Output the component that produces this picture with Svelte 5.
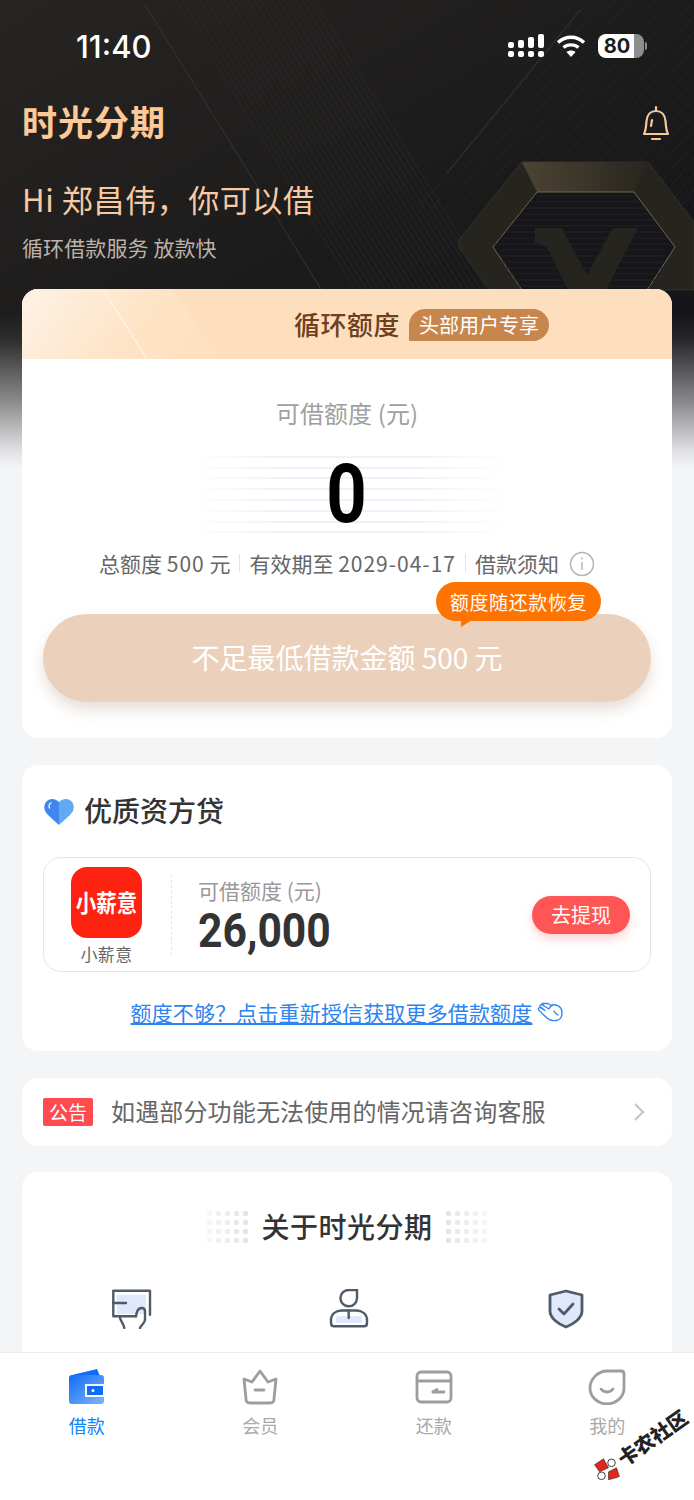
<script lang="ts">
  // hairlines of the dark hero background
  const leftBand = Array.from({ length: 24 }, (_, i) => 170 + i * 6);
  const rightBand = Array.from({ length: 26 }, (_, i) => 590 + i * 13);
  const stripes = [0, 11, 21, 32, 43, 54, 65, 75];
  const hexLines = Array.from({ length: 16 }, (_, i) => 196 + i * 6);
  const dots = Array.from({ length: 20 }, (_, i) => i);

  const tabs = [
    { label: "借款", active: true },
    { label: "会员", active: false },
    { label: "还款", active: false },
    { label: "我的", active: false },
  ];
</script>

<div class="page">
  <div class="hero">
    <svg class="heroArt" viewBox="0 0 694 470" width="694" height="470" fill="none">
      <defs>
        <linearGradient id="hexTop" x1="0" y1="0" x2="1" y2="0">
          <stop offset="0" stop-color="#4c4434" />
          <stop offset="1" stop-color="#29261f" />
        </linearGradient>
      </defs>
      <line x1="145" y1="5" x2="430" y2="465" stroke="#37362f" stroke-width="1" />
      {#each leftBand as x}
        <line x1={x} y1="-10" x2={x + 290} y2="460" stroke="#302f2b" stroke-width="0.6" />
      {/each}
      <line x1="447" y1="173" x2="580" y2="10" stroke="#37362f" stroke-width="1" />
      {#each rightBand as x}
        <line x1={x} y1="0" x2={x - 170} y2="207" stroke="#2c2b28" stroke-width="0.6" />
      {/each}
      <path d="M522 162H648L694 222V290H490L459 248V240Z" fill="#26241f" stroke="#3a362b" stroke-width="0.8" />
      <path d="M522 162H648L634 192H537Z" fill="url(#hexTop)" />
      <path d="M537 192H634L675 247L647 290H522L493 247Z" fill="#16161a" stroke="#75684e" stroke-width="1" />
      {#each hexLines as y}
        <line x1={y < 247 ? 537 - (y - 192) * 0.8 : 500} y1={y} x2={y < 247 ? 634 + (y - 192) * 0.7 : 665} y2={y} stroke="#232326" stroke-width="1" />
      {/each}
      <path d="M535 228H562L587 275L613 228H638L607 288V290H567V288L547 247L535 243Z" fill="#26241f" />
    </svg>
  </div>

  <div class="scroll">
    <div class="status">
      <span class="time">11:40</span>
      <div class="statusIcons">
        <svg width="36" height="26" viewBox="0 0 36 26" fill="#fff">
          <rect x="0" y="9" width="6" height="6" rx="2" />
          <rect x="0" y="18" width="6" height="6" rx="2" />
          <rect x="10" y="7" width="6" height="8" rx="2" />
          <rect x="10" y="18" width="6" height="6" rx="2" />
          <rect x="20" y="4" width="6" height="11" rx="2" />
          <rect x="20" y="18" width="6" height="6" rx="2" />
          <rect x="30" y="1" width="6" height="14" rx="2" />
          <rect x="30" y="18" width="6" height="6" rx="2" />
        </svg>
        <svg class="wifi" width="30" height="24" viewBox="0 0 30 24" fill="none" stroke="#fff" stroke-width="3.4">
          <path d="M2 8.500C9.500 1.500 20.500 1.500 28 8.500" />
          <path d="M7.500 13.500C11.500 10 18.500 10 22.500 13.500" />
          <path d="M15 23L10.500 18C13 16 17 16 19.500 18Z" fill="#fff" stroke="none" />
        </svg>
        <div class="battery"><span>80</span></div>
        <div class="nub"></div>
      </div>
    </div>

    <div class="brandRow">
      <span class="brand">时光分期</span>
      <svg width="30" height="36" viewBox="0 0 30 36" fill="none" stroke="#f8c797" stroke-width="2.200" stroke-linecap="round" stroke-linejoin="round">
        <path d="M3 29C5 25 5 22 5.500 16C6 9.500 10 6 15 6C20 6 24 9.500 24.500 16C25 22 25 25 27 29Z" />
        <path d="M15 2V6" />
        <path d="M11 34H19" />
        <path d="M11 15L10 21" />
      </svg>
    </div>
    <div class="greeting">Hi 郑昌伟，你可以借</div>
    <div class="sub">循环借款服务 放款快</div>

    <div class="card first">
      <div class="cardHead">
        <div class="shine"></div>
        <div class="shineLine"></div>
        <span class="headTitle">循环额度</span>
        <span class="headBadge">头部用户专享</span>
      </div>
      <div class="limitBody">
        <div class="limitLabel">可借额度 (元)</div>
        <div class="amount">
          {#each stripes as top}
            <i class="stripe" style="top: {top}px"></i>
          {/each}
          <span class="zero">0</span>
        </div>
        <div class="info">
          <span>总额度 <b>500</b> 元</span>
          <i class="sep"></i>
          <span>有效期至 <b>2029-04-17</b></span>
          <i class="sep"></i>
          <span>借款须知</span>
          <svg class="infoIcon" width="26" height="26" viewBox="0 0 26 26" fill="none" stroke="#b4b4b4" stroke-width="1.500">
            <circle cx="13" cy="13" r="11.500" />
            <path d="M13 11V19" />
            <path d="M13 6.500V8.500" />
          </svg>
        </div>
        <div class="cta">
          <div class="tip">额度随还款恢复</div>
          <span>不足最低借款金额 500 元</span>
        </div>
      </div>
    </div>

    <div class="card loans">
      <div class="loanTitle">
        <svg width="30" height="27" viewBox="0 0 30 27">
          <path d="M15 4C11 0 5 0 2 4C-1 8.500 0 13 4 17L15 27Z" fill="#3f86ee" />
          <path d="M15 4C19 0 25 0 28 4C31 8.500 30 13 26 17L15 27Z" fill="#62a9f4" />
          <path d="M7 5C5 6 4.500 8 5.500 10" fill="none" stroke="#fff" stroke-width="1.300" stroke-linecap="round" />
        </svg>
        <span>优质资方贷</span>
      </div>
      <div class="offer">
        <div class="lender">
          <div class="lenderLogo"><span>小薪意</span></div>
          <div class="lenderName">小薪意</div>
        </div>
        <div class="rule"></div>
        <div class="offerText">
          <div class="offerLabel">可借额度 (元)</div>
          <div class="offerValue">26,000</div>
        </div>
        <div class="withdraw">去提现</div>
      </div>
      <div class="more">
        <span>额度不够？点击重新授信获取更多借款额度</span>
        <svg width="26" height="20" viewBox="0 0 26 20" fill="none" stroke="#2c84f0" stroke-width="1.300" stroke-linejoin="round" stroke-linecap="round">
          <path d="M10 16C7 13 3 10 1.500 7.500C1 6 2.500 5 4 6L8 8.500L3 4.500C2.500 3 4 2 5.500 3L12 7C13 4 15 2 19 3C23 4 25 7.500 25 11C25 15 23 18 19 18.500C15 19 12 18 10 16Z" />
          <path d="M6 3L5 1.500H11L15 4" />
          <path d="M17 9C18 11 19 12 21 13" />
        </svg>
      </div>
    </div>

    <div class="card notice">
      <span class="noticeTag">公告</span>
      <span class="noticeText">如遇部分功能无法使用的情况请咨询客服</span>
      <svg width="12" height="20" viewBox="0 0 12 20" fill="none" stroke="#c8c8c8" stroke-width="2.400">
        <path d="M2 2L10 10L2 18" />
      </svg>
    </div>

    <div class="card about">
      <div class="aboutTitle">
        <div class="dots">{#each dots as d}<i style="opacity: {0.35 + (d % 5) * 0.15}"></i>{/each}</div>
        <span>关于时光分期</span>
        <div class="dots flip">{#each dots as d}<i style="opacity: {0.35 + (d % 5) * 0.15}"></i>{/each}</div>
      </div>
      <div class="aboutIcons">
        <svg width="40" height="40" viewBox="0 0 40 40" fill="none" stroke="#4e5b68" stroke-width="2.400" stroke-linejoin="round" stroke-linecap="round">
          <path d="M4.700 5.700H34V25H24L25 21L30 19L33 22V25H4.700Z" fill="#e0e8fb" stroke="none" />
          <path d="M38 25.700V1.700H1.300V27.300H24" />
          <path d="M1.300 14H14" />
          <path d="M8 29C9 33 12 35 12.300 39M24 27.300C24.500 23 26 19 29.700 19C32 19 33 20.500 33 22.300V30.700C33 34 29 36 28 39" />
        </svg>
        <svg width="40" height="40" viewBox="0 0 40 40" fill="none" stroke="#4e5b68" stroke-width="2.400" stroke-linejoin="round" stroke-linecap="round">
          <path d="M7 27H33V34H7Z" fill="#e0e8fb" stroke="none" />
          <path d="M19.700 1H28V9C28 14 24 17.300 19.700 17.300C15 17.300 11.400 13.500 11.400 9C11.400 4.500 15 1 19.700 1Z" />
          <path d="M12 21.500C7 22 2 25 2 31V34C2 36 3 37.300 5 37.300H35C37 37.300 38 36 38 34V31C38 25 33 22 28 21.500Z" />
          <path d="M19.700 21.500V29" />
        </svg>
        <svg width="40" height="40" viewBox="0 0 40 40" fill="none" stroke="#4e5b68" stroke-width="2.800" stroke-linejoin="round" stroke-linecap="round">
          <path d="M20 2L36 6V22C36 29 28 35 20 38C12 35 4 29 4 22V6Z" fill="#e0e8fb" />
          <path d="M13 20L18 25L27 15" />
        </svg>
      </div>
    </div>
  </div>

  <div class="tabbar">
    {#each tabs as tab, i}
      <div class="tab" class:active={tab.active}>
        {#if i === 0}
          <svg width="38" height="36" viewBox="0 0 38 36">
            <defs>
              <linearGradient id="wallet" x1="0" y1="0" x2="1" y2="1">
                <stop offset="0" stop-color="#0f6cf6" />
                <stop offset="1" stop-color="#7db5fb" />
              </linearGradient>
            </defs>
            <path d="M4 6L29 0L32 7H4Z" fill="#0f6cf6" />
            <rect x="1" y="6" width="35" height="29" rx="3" fill="url(#wallet)" />
            <rect x="18" y="16" width="18" height="11" fill="#0f6cf6" stroke="#fff" stroke-width="2" />
            <circle cx="25" cy="21.500" r="1.500" fill="#fff" />
          </svg>
        {:else if i === 1}
          <svg width="38" height="36" viewBox="0 0 38 36" fill="none" stroke="#9d9d9d" stroke-width="2.800" stroke-linejoin="round" stroke-linecap="round">
            <path d="M3 10L11 13L19 2L27 13L35 10L33 30C33 33 31 34 29 34H9C7 34 5 33 5 30Z" />
            <path d="M14 21H23" />
          </svg>
        {:else if i === 2}
          <svg width="38" height="36" viewBox="0 0 38 36" fill="none" stroke="#9d9d9d" stroke-width="2.800" stroke-linejoin="round" stroke-linecap="round">
            <rect x="2" y="3" width="34" height="30" rx="4" />
            <path d="M18 23H29" />
            <path d="M18 23L22 20.500" />
            <path d="M2 12H36" />
          </svg>
        {:else}
          <svg width="38" height="36" viewBox="0 0 38 36" fill="none" stroke="#9d9d9d" stroke-width="2.800" stroke-linecap="round">
            <path d="M19 2H33C35 2 36 3 36 5V19C36 28 28 35 19 35C10 35 2 28 2 19C2 10 10 2 19 2Z" />
            <path d="M13 20C16 24 22 24 25 20" />
          </svg>
        {/if}
        <span>{tab.label}</span>
      </div>
    {/each}
  </div>

  <div class="watermark">
    <svg width="26" height="26" viewBox="-13 -13 26 26">
      <g transform="rotate(35)">
        <path d="M-12 -5L-3 -11L2 -2L-7 2Z M2 2L10 -2L13 7L2 10Z" fill="#e1261c" stroke="#111" stroke-width="0.500" />
        <circle cx="5" cy="-7" r="3.800" fill="#fff" stroke="#111" stroke-width="0.800" />
        <circle cx="-5" cy="6" r="3.800" fill="#fff" stroke="#111" stroke-width="0.800" />
      </g>
    </svg>
    <span>卡农社区</span>
  </div>
</div>

<style>
  :global(body) {
    margin: 0;
    background: #f4f5f7;
  }

  .page {
    position: relative;
    width: 694px;
    height: 1500px;
    overflow: hidden;
    display: flex;
    flex-direction: column;
    background: #f4f5f7;
    font-family: "Noto Sans CJK SC", "Noto Sans", sans-serif;
  }

  .hero {
    position: absolute;
    top: 0;
    left: 0;
    width: 694px;
    height: 470px;
    background: linear-gradient(150deg, #272523 0, #1d1c1c 45%, #16161a 75%);
  }

  .hero::after {
    content: "";
    position: absolute;
    inset: 0;
    background: linear-gradient(180deg, rgba(244, 245, 247, 0) 315px, rgba(244, 245, 247, 0.08) 340px, rgba(244, 245, 247, 0.5) 400px, rgba(244, 245, 247, 0.9) 450px, #f4f5f7 468px);
  }

  .heroArt {
    display: block;
  }

  .scroll {
    position: relative;
    flex: 1;
    min-height: 0;
    overflow: hidden;
    padding: 0 22px;
  }

  .status {
    height: 92px;
    display: flex;
    align-items: center;
    justify-content: space-between;
    padding-left: 54px;
  }

  .time {
    font-family: Inter, sans-serif;
    font-size: 31px;
    font-weight: 500;
    color: #fff;
  }

  .statusIcons {
    display: flex;
    align-items: center;
    margin-right: 25px;
  }

  .wifi {
    margin-left: 12px;
  }

  .battery {
    width: 46px;
    height: 24px;
    margin-left: 12px;
    border-radius: 8px;
    background: linear-gradient(90deg, #fff 0, #fff 36px, #8e8e8e 36px);
    display: flex;
    align-items: center;
    justify-content: center;
    padding-right: 8px;
    box-sizing: border-box;
  }

  .battery span {
    font-family: Inter, sans-serif;
    font-size: 20px;
    font-weight: 700;
    line-height: 24px;
    color: #1c1c1c;
  }

  .nub {
    width: 2px;
    height: 8px;
    margin-left: 1px;
    border-radius: 0 2px 2px 0;
    background: #8e8e8e;
  }

  .brandRow {
    margin-top: 11px;
    height: 40px;
    display: flex;
    align-items: center;
    justify-content: space-between;
    padding-right: 1px;
  }

  .brand {
    font-size: 35px;
    font-weight: 700;
    line-height: 36px;
    padding-bottom: 4px;
    letter-spacing: 1px;
    color: #fcc997;
  }

  .greeting {
    margin-top: 36px;
    font-size: 31px;
    line-height: 40px;
    letter-spacing: 0.6px;
    color: #f9c9a2;
  }

  .sub {
    margin-top: 13px;
    font-size: 21px;
    line-height: 30px;
    letter-spacing: 0.1px;
    color: #bdb3aa;
  }

  .card {
    background: #fff;
    border-radius: 16px;
    overflow: hidden;
  }

  .first {
    margin-top: 27px;
  }

  .cardHead {
    position: relative;
    height: 70px;
    background: #fedfbd;
    display: flex;
    align-items: center;
    justify-content: center;
    gap: 9px;
    padding-left: 149px;
  }

  .shine {
    position: absolute;
    left: 0;
    top: 0;
    width: 198px;
    height: 70px;
    background: linear-gradient(125deg, rgba(255, 255, 255, 0.6) 0, rgba(255, 255, 255, 0.12) 60%, rgba(255, 255, 255, 0.04) 100%);
    clip-path: polygon(0 0, 76% 0, 100% 100%, 0 100%);
  }

  .shineLine {
    position: absolute;
    left: 80px;
    top: 0;
    width: 46px;
    height: 70px;
    background: rgba(255, 255, 255, 0.5);
    clip-path: polygon(0 0, 1.5px 0, 100% 100%, 44px 100%);
  }

  .headTitle {
    position: relative;
    font-size: 26px;
    font-weight: 500;
    letter-spacing: 0.5px;
    line-height: 36px;
    color: #6f3f1e;
  }

  .headBadge {
    position: relative;
    height: 32px;
    margin-top: 2px;
    padding: 0 10px;
    border-radius: 16px 16px 16px 0;
    background: #c8864f;
    font-size: 20px;
    line-height: 31px;
    color: #fff;
  }

  .limitBody {
    padding: 38px 21px 36px;
  }

  .limitLabel {
    font-size: 24px;
    line-height: 32px;
    letter-spacing: 0.1px;
    text-align: center;
    color: #a0a0a0;
  }

  .amount {
    position: relative;
    height: 76px;
    margin-top: 27px;
    display: flex;
    align-items: center;
    justify-content: center;
  }

  .stripe {
    position: absolute;
    left: 146px;
    width: 320px;
    height: 2px;
    background: linear-gradient(90deg, rgba(238, 242, 248, 0), #eef2f8 30%, #eef2f8 70%, rgba(238, 242, 248, 0));
  }

  .zero {
    position: relative;
    font-family: Roboto, sans-serif;
    font-size: 82px;
    font-weight: 700;
    line-height: 76px;
    color: #000;
    transform: scaleX(0.86);
  }

  .info {
    height: 30px;
    margin-top: 17px;
    display: flex;
    align-items: center;
    justify-content: center;
    font-size: 21px;
    line-height: 28px;
    padding-bottom: 2px;
    box-sizing: border-box;
    color: #666;
  }

  .info b {
    font-weight: 400;
    letter-spacing: 1px;
  }

  .sep {
    width: 1px;
    height: 18px;
    margin: 0 9px;
    background: #e2e2e2;
  }

  .infoIcon {
    margin: 2px 0 0 10px;
  }

  .cta {
    position: relative;
    height: 88px;
    margin-top: 35px;
    border-radius: 44px;
    background: #ebd0bb;
    box-shadow: 0 8px 14px rgba(150, 110, 80, 0.22);
    display: flex;
    align-items: center;
    justify-content: center;
    font-size: 28px;
    line-height: 36px;
    padding-bottom: 3px;
    box-sizing: border-box;
    color: #fff;
  }

  .tip {
    position: absolute;
    top: -32px;
    left: 393px;
    width: 165px;
    height: 39px;
    border-radius: 20px;
    background: #ff7300;
    font-size: 19px;
    letter-spacing: 0.6px;
    line-height: 39px;
    text-align: center;
    color: #fff;
  }

  .tip::after {
    content: "";
    position: absolute;
    left: 25px;
    top: 38px;
    border-top: 7px solid #ff7300;
    border-right: 11px solid transparent;
  }

  .loans {
    margin-top: 27px;
    padding: 26px 21px 24px;
  }

  .loanTitle {
    height: 40px;
    display: flex;
    align-items: center;
    gap: 10px;
    padding-left: 1px;
    font-size: 28px;
    font-weight: 500;
    line-height: 36px;
    color: #333;
  }

  .loanTitle span {
    padding-bottom: 3px;
  }

  .offer {
    height: 115px;
    margin-top: 26px;
    box-sizing: border-box;
    border: 1.5px solid #e5e5e5;
    border-radius: 18px;
    display: flex;
    align-items: center;
    padding-right: 20px;
  }

  .lender {
    width: 125px;
    height: 100%;
    padding-top: 9px;
    box-sizing: border-box;
    display: flex;
    flex-direction: column;
    align-items: center;
  }

  .lenderLogo {
    width: 71px;
    height: 71px;
    border-radius: 16px;
    background: #fe2310;
    font-size: 20.500px;
    font-weight: 700;
    line-height: 71px;
    text-align: center;
    color: #fff;
  }

  .lenderLogo span {
    display: inline-block;
    transform: scaleY(1.15);
  }

  .lenderName {
    margin-top: 3px;
    font-size: 17px;
    letter-spacing: 0.3px;
    line-height: 26px;
    color: #666;
  }

  .rule {
    height: 80px;
    margin-left: 2px;
    border-left: 1px dashed #e4e4e4;
  }

  .offerText {
    flex: 1;
    padding-left: 26px;
  }

  .offerLabel {
    font-size: 21px;
    line-height: 30px;
    padding-top: 2px;
    color: #999;
  }

  .offerValue {
    font-family: Roboto, sans-serif;
    font-size: 49px;
    font-weight: 700;
    line-height: 50px;
    margin-top: 1px;
    color: #333;
    transform: scaleX(0.87);
    transform-origin: left center;
  }

  .withdraw {
    width: 98px;
    height: 38px;
    border-radius: 19px;
    background: #ff5555;
    box-shadow: 0 5px 10px rgba(255, 85, 85, 0.25);
    font-size: 20px;
    line-height: 38px;
    text-align: center;
    color: #fff;
  }

  .more {
    height: 30px;
    margin-top: 25px;
    display: flex;
    align-items: center;
    justify-content: center;
    gap: 5px;
    font-size: 21px;
    letter-spacing: 0.15px;
    color: #2c84f0;
    line-height: 30px;
  }

  .more span {
    text-decoration: underline;
    text-underline-offset: 2px;
  }

  .notice {
    margin-top: 27px;
    height: 68px;
    display: flex;
    align-items: center;
    padding: 0 27px 0 21px;
  }

  .noticeTag {
    width: 50px;
    height: 28px;
    border-radius: 2px;
    background: #ff4a4f;
    font-size: 19px;
    line-height: 28px;
    text-align: center;
    color: #fff;
  }

  .noticeText {
    flex: 1;
    margin-left: 18px;
    padding-bottom: 3px;
    font-size: 24px;
    letter-spacing: 0.15px;
    line-height: 34px;
    color: #666;
  }

  .about {
    margin-top: 26px;
    padding-top: 35px;
    height: 300px;
  }

  .aboutTitle {
    height: 40px;
    display: flex;
    align-items: center;
    justify-content: center;
    gap: 13px;
    font-size: 28px;
    font-weight: 500;
    letter-spacing: 0.5px;
    line-height: 36px;
    color: #333;
  }

  .aboutTitle span {
    padding-bottom: 3px;
  }

  .dots {
    display: grid;
    grid-template-columns: repeat(5, 5px);
    gap: 4px;
  }

  .dots i {
    width: 5px;
    height: 5px;
    border-radius: 1.5px;
    background: #dfe3ea;
  }

  .dots.flip {
    transform: scaleX(-1);
  }

  .aboutIcons {
    margin-top: 42px;
    display: flex;
    justify-content: space-between;
    padding: 0 86px 0 90px;
  }

  .tabbar {
    flex: none;
    height: 148px;
    box-sizing: border-box;
    position: relative;
    background: #fff;
    border-top: 1px solid #eceded;
    display: grid;
    grid-template-columns: repeat(4, 1fr);
  }

  .tab {
    display: flex;
    flex-direction: column;
    align-items: center;
    padding-top: 16px;
    font-size: 18px;
    line-height: 28px;
    color: #a8a8a8;
  }

  .tab span {
    margin-top: 6px;
  }

  .tab.active {
    color: #1184f8;
  }

  .watermark {
    position: absolute;
    left: 586px;
    top: 1433px;
    display: flex;
    align-items: center;
    gap: 3px;
    white-space: nowrap;
    transform: rotate(-35deg);
    font-size: 20px;
    font-weight: 900;
    line-height: 26px;
    color: #222;
  }
</style>
